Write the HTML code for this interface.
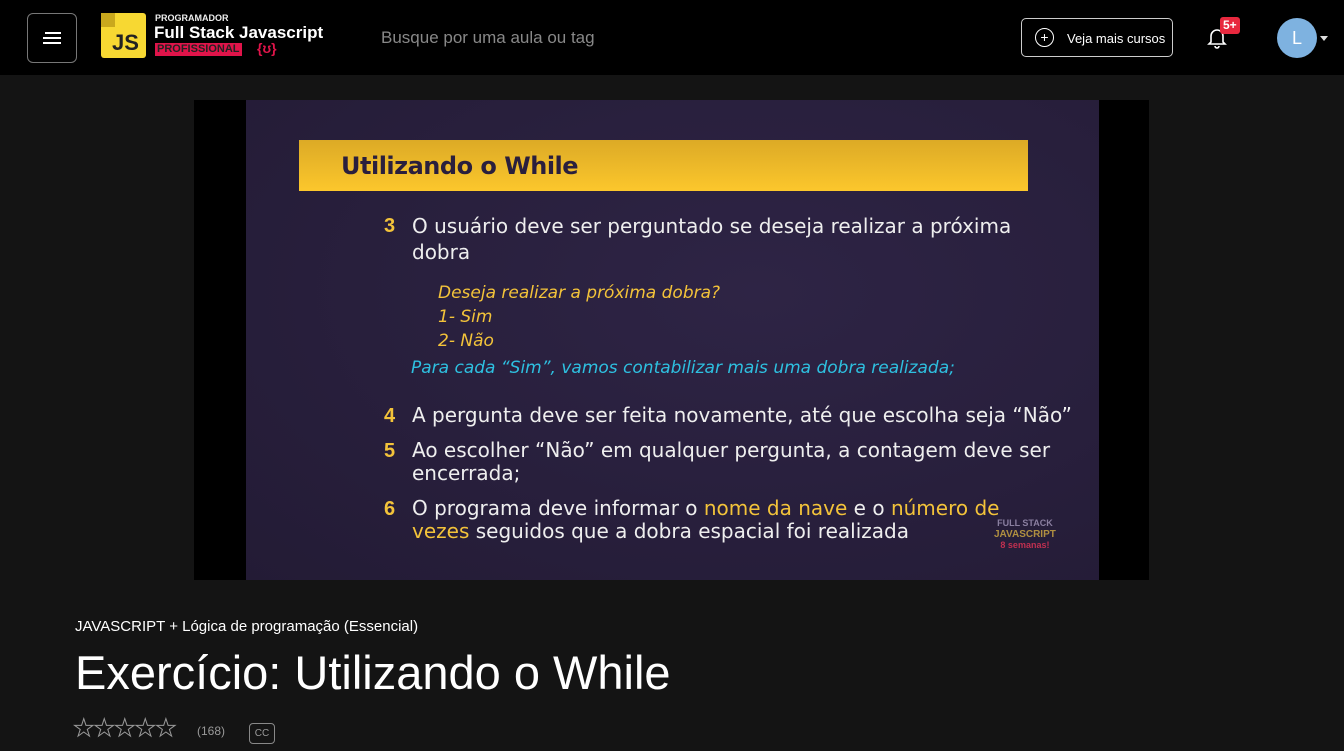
<!DOCTYPE html>
<html><head><meta charset="utf-8"><style>
*{margin:0;padding:0;box-sizing:border-box}
body{width:1344px;height:751px;background:#141414;font-family:"Liberation Sans","DejaVu Sans",sans-serif;overflow:hidden;position:relative;color:#fff}
.hdr{position:absolute;left:0;top:0;width:1344px;height:75px;background:#000}
.menu{position:absolute;left:27px;top:13px;width:50px;height:50px;border:1px solid #777;border-radius:6px}
.menu i{position:absolute;left:15px;width:18px;height:2px;background:#fff}
.a{position:absolute}
.slide{position:absolute;left:246px;top:100px;width:853px;height:480px;background:radial-gradient(ellipse at 60% 40%,#2e2445,#231b35)}
.st{position:absolute;color:#eee;font-size:20px;font-family:"DejaVu Sans",sans-serif}
.n{color:#f3c33a;font-weight:bold;position:absolute;left:138px}
.y{color:#f3c33a}
</style></head><body>
<div class="hdr">
 <div class="menu"><i style="top:18px;left:17px;width:16px"></i><i style="top:23px"></i><i style="top:28px"></i></div>
 <div class="a" style="left:101px;top:13px;width:45px;height:45px;background:#f7d832;border-radius:3px"><div style="position:absolute;left:0;top:0;width:14px;height:14px;background:#c9a81d"></div><span style="position:absolute;left:11px;top:17px;color:#222;font-weight:bold;font-size:22px">JS</span></div>
 <div class="a" style="left:155px;top:13px;font-size:9px;font-weight:bold;color:#eee">PROGRAMADOR</div>
 <div class="a" style="left:154px;top:23px;font-size:17px;font-weight:bold;color:#fff">Full Stack Javascript</div>
 <div class="a" style="left:155px;top:43px;background:#e0144a;color:#222;font-size:11px;font-weight:bold;padding:0 2px;line-height:13px">PROFISSIONAL</div>
 <div class="a" style="left:257px;top:40px;font-size:14px;color:#e0144a;font-weight:bold">{ʊ}</div>
 <div class="a" style="left:381px;top:28px;font-size:17px;color:#888">Busque por uma aula ou tag</div>
 <div class="a" style="left:1021px;top:18px;width:152px;height:39px;border:1px solid #ccc;border-radius:5px"><div style="position:absolute;left:13px;top:9px;width:19px;height:19px;border:1.5px solid #fff;border-radius:50%;text-align:center;font-size:14px;line-height:16px">+</div><span style="position:absolute;left:45px;top:12px;font-size:13px">Veja mais cursos</span></div>
 <svg class="a" style="left:1207px;top:27px" width="20" height="22" viewBox="0 0 20 22"><path d="M4 15V9a6 6 0 0112 0v6l2 2H2z M8 19a2 2 0 004 0" fill="none" stroke="#fff" stroke-width="1.6"/></svg>
 <div class="a" style="left:1220px;top:17px;background:#e8283e;border-radius:3px;font-size:12px;font-weight:bold;padding:1px 3px;line-height:15px">5+</div>
 <div class="a" style="left:1277px;top:18px;width:40px;height:40px;border-radius:50%;background:#7eb2e0;text-align:center;line-height:40px;font-size:18px">L</div>
 <div class="a" style="left:1320px;top:36px;border:4px solid transparent;border-top:5px solid #ddd"></div>
</div>
<div class="a" style="left:194px;top:100px;width:955px;height:480px;background:#000"></div>
<div class="slide">
 <div class="a" style="left:53px;top:40px;width:729px;height:51px;background:linear-gradient(#dcaa26,#fcc72c)"><span style="position:absolute;left:42px;top:12px;font-size:24px;font-weight:bold;color:#2a1f3d;font-family:'DejaVu Sans',sans-serif;letter-spacing:-0.5px">Utilizando o While</span></div>
 <div class="n" style="top:115px;font-size:20px">3</div>
 <div class="st" style="left:166px;top:113px;line-height:26px">O usuário deve ser perguntado se deseja realizar a próxima<br>dobra</div>
 <div class="st y" style="left:192px;top:181px;font-size:17px;font-style:italic;line-height:24px">Deseja realizar a próxima dobra?<br>1- Sim<br>2- Não</div>
 <div class="st" style="left:165px;top:258px;font-size:17px;font-style:italic;color:#2ec0e0">Para cada “Sim”, vamos contabilizar mais uma dobra realizada;</div>
 <div class="n" style="top:305px;font-size:20px">4</div>
 <div class="st" style="left:166px;top:303px">A pergunta deve ser feita novamente, até que escolha seja “Não”</div>
 <div class="n" style="top:340px;font-size:20px">5</div>
 <div class="st" style="left:166px;top:339px;line-height:23px">Ao escolher “Não” em qualquer pergunta, a contagem deve ser<br>encerrada;</div>
 <div class="n" style="top:398px;font-size:20px">6</div>
 <div class="st" style="left:166px;top:397px;line-height:23px">O programa deve informar o <span class="y">nome da nave</span> e o <span class="y">número de</span><br><span class="y">vezes</span> seguidos que a dobra espacial foi realizada</div>
 <div class="a" style="left:748px;top:418px;font-size:9px;font-weight:bold;color:#8a7fa0;line-height:11px;text-align:center">FULL STACK<br><span style="color:#b09040;font-size:10px">JAVASCRIPT</span><br><span style="color:#c03050">8 semanas!</span></div>
</div>
<div class="a" style="left:75px;top:618px;font-size:15px;color:#fff">JAVASCRIPT + Lógica de programação (Essencial)</div>
<div class="a" style="left:75px;top:645px;font-size:47px;color:#fff">Exercício: Utilizando o While</div>
<div class="a" style="left:73px;top:714px;font-size:24px;color:#141414;-webkit-text-stroke:1px #999;letter-spacing:-1px">★★★★★</div>
<div class="a" style="left:197px;top:724px;font-size:12px;color:#999">(168)</div>
<div class="a" style="left:249px;top:723px;width:26px;height:21px;border:1px solid #888;border-radius:4px;font-size:10px;color:#999;text-align:center;line-height:19px">CC</div>
</body></html>
